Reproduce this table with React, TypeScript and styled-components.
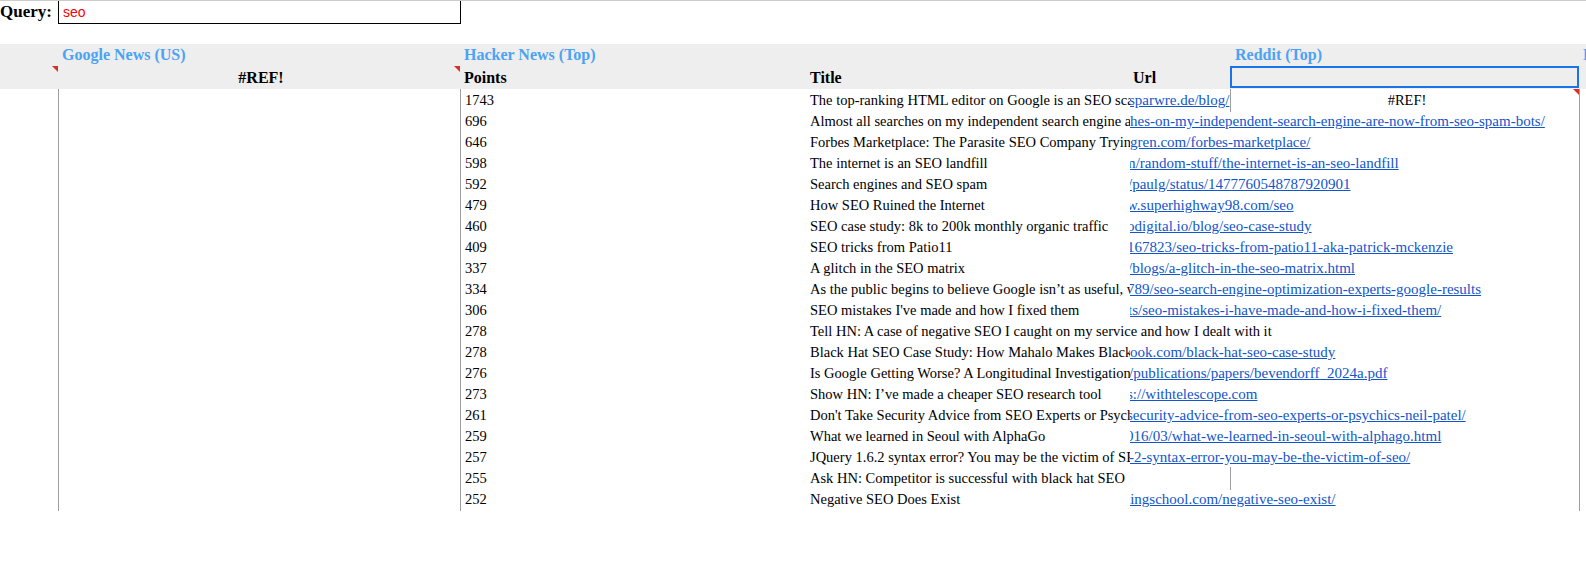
import React from 'react';
import styled, { createGlobalStyle, css } from 'styled-components';

// Anchos de columna de la hoja (A..G)
const COLS = '58px 402px 346px 324px 100px 349px 220px';

interface Story {
  points: number;
  title: string;
  url?: string;
  shift?: number; // recorte a la izquierda del enlace
}

const stories: Story[] = [
  { points: 1743, title: 'The top-ranking HTML editor on Google is an SEO scam', url: 'sparwre.de/blog/', shift: -1 },
  { points: 696, title: 'Almost all searches on my independent search engine are now from SEO spam bots', url: 'hes-on-my-independent-search-engine-are-now-from-seo-spam-bots/' },
  { points: 646, title: 'Forbes Marketplace: The Parasite SEO Company Trying to Devour Its Own Host', url: 'gren.com/forbes-marketplace/' },
  { points: 598, title: 'The internet is an SEO landfill', url: 'm/random-stuff/the-internet-is-an-seo-landfill', shift: -6 },
  { points: 592, title: 'Search engines and SEO spam', url: '/paulg/status/1477760548787920901', shift: -2 },
  { points: 479, title: 'How SEO Ruined the Internet', url: 'w.superhighway98.com/seo', shift: -3 },
  { points: 460, title: 'SEO case study: 8k to 200k monthly organic traffic', url: 'odigital.io/blog/seo-case-study', shift: -3 },
  { points: 409, title: 'SEO tricks from Patio11', url: '167823/seo-tricks-from-patio11-aka-patrick-mckenzie', shift: -3 },
  { points: 337, title: 'A glitch in the SEO matrix', url: '/blogs/a-glitch-in-the-seo-matrix.html', shift: -2 },
  { points: 334, title: 'As the public begins to believe Google isn’t as useful, where does that leave SEO?', url: '789/seo-search-engine-optimization-experts-google-results', shift: -3 },
  { points: 306, title: "SEO mistakes I've made and how I fixed them", url: 'ts/seo-mistakes-i-have-made-and-how-i-fixed-them/', shift: -2 },
  { points: 278, title: 'Tell HN: A case of negative SEO I caught on my service and how I dealt with it' },
  { points: 278, title: 'Black Hat SEO Case Study: How Mahalo Makes Black Hat Look White', url: 'ook.com/black-hat-seo-case-study' },
  { points: 276, title: 'Is Google Getting Worse? A Longitudinal Investigation of SEO Spam in Search Engines', url: '/publications/papers/bevendorff_2024a.pdf', shift: -1 },
  { points: 273, title: 'Show HN: I’ve made a cheaper SEO research tool', url: 's://withtelescope.com', shift: -3 },
  { points: 261, title: "Don't Take Security Advice from SEO Experts or Psychics", url: 'security-advice-from-seo-experts-or-psychics-neil-patel/', shift: -3 },
  { points: 259, title: 'What we learned in Seoul with AlphaGo', url: '016/03/what-we-learned-in-seoul-with-alphago.html', shift: -4 },
  { points: 257, title: 'JQuery 1.6.2 syntax error? You may be the victim of SEO', url: '-2-syntax-error-you-may-be-the-victim-of-seo/', shift: -1 },
  { points: 255, title: 'Ask HN: Competitor is successful with black hat SEO' },
  { points: 252, title: 'Negative SEO Does Exist', url: 'tingschool.com/negative-seo-exist/', shift: -4 },
];

const App: React.FC = () => {
  return (
    <Page>
      <GlobalStyle />
      <QueryBar>
        <QueryLabel>Query:</QueryLabel>
        <QueryInput type="text" defaultValue="seo" />
      </QueryBar>
      <Spacer />

      <Band>
        <Row $h={22}>
          <Cell />
          <Cell $head $blue>Google News (US)</Cell>
          <Cell $head $blue>Hacker News (Top)</Cell>
          <Cell />
          <Cell />
          <Cell $head $blue $pad={5}>Reddit (Top)</Cell>
          <Cell $head $blue>Lobsters (Top)</Cell>
        </Row>
        <Row $h={23}>
          <Cell $note />
          <Cell $head $align="center" $note>#REF!</Cell>
          <Cell $head>Points</Cell>
          <Cell $head>Title</Cell>
          <Cell $head $pad={3}>Url</Cell>
          <Selected />
          <Cell />
        </Row>
      </Band>

      {stories.map((s, i) => (
        <Row key={i} $h={21} $drop>
          <Cell />
          <Cell $line />
          <Cell $line>{s.points}</Cell>
          <Cell $clip={!!s.url}>{s.title}</Cell>
          {i === 0 ? (
            <>
              <Cell $clip $pad={0}>
                <Link href="#" $shift={s.shift ?? 0}>{s.url}</Link>
              </Cell>
              <Cell $line $align="center" $note>#REF!</Cell>
            </>
          ) : s.url ? (
            <Cell $clip $pad={0} $span={2}>
              <Link href="#" $shift={s.shift ?? 0}>{s.url}</Link>
            </Cell>
          ) : (
            <>
              <Cell />
              <Cell $line={i === 18} />
            </>
          )}
          <Cell $line />
        </Row>
      ))}
    </Page>
  );
};

const GlobalStyle = createGlobalStyle`
  html, body {
    margin: 0;
    padding: 0;
    background: #fff;
  }
  body {
    font-family: "Liberation Serif", "Times New Roman", serif;
    color: #000;
  }
`;

const Page = styled.div`
  width: 1586px;
  height: 575px;
  overflow: hidden;
  border-top: 1px solid #cccccc;
  box-sizing: border-box;
`;

const QueryBar = styled.div`
  display: flex;
  align-items: center;
  height: 22px;
`;

const QueryLabel = styled.span`
  width: 58px;
  font-weight: bold;
  font-size: 17px;
  line-height: 22px;
`;

const QueryInput = styled.input`
  width: 403px;
  height: 24px;
  margin: -1px 0 0 0;
  padding: 0 4px;
  box-sizing: border-box;
  border: 1px solid #000;
  border-radius: 0;
  outline: none;
  color: #ff0000;
  font-family: "Liberation Sans", Arial, sans-serif;
  font-size: 14px;
`;

const Spacer = styled.div`
  height: 21px;
`;

const Band = styled.div`
  background: #eeeeee;
`;

const Row = styled.div<{ $h: number; $drop?: boolean }>`
  display: grid;
  grid-template-columns: ${COLS};
  height: ${({ $h }) => $h}px;
  line-height: ${({ $h, $drop }) => ($drop ? $h + 2 : $h)}px;
`;

interface CellProps {
  $head?: boolean;
  $blue?: boolean;
  $align?: 'left' | 'center';
  $line?: boolean;
  $clip?: boolean;
  $note?: boolean;
  $pad?: number;
  $span?: number;
}

const Cell = styled.div<CellProps>`
  position: relative;
  box-sizing: border-box;
  padding-left: ${({ $pad }) => ($pad ?? 4)}px;
  white-space: nowrap;
  overflow: ${({ $clip }) => ($clip ? 'hidden' : 'visible')};
  text-align: ${({ $align }) => $align ?? 'left'};
  font-size: ${({ $head }) => ($head ? '16px' : '14.5px')};
  font-weight: ${({ $head }) => ($head ? 'bold' : 'normal')};
  color: ${({ $blue }) => ($blue ? '#4ba3f2' : '#000')};
  ${({ $line }) => $line && css`border-left: 1px solid #9e9e9e;`}
  ${({ $span }) => $span && css`grid-column: span ${$span};`}
  ${({ $note }) =>
    $note &&
    css`
      &::after {
        content: '';
        position: absolute;
        top: 0;
        right: 0;
        border-style: solid;
        border-width: 0 6px 6px 0;
        border-color: transparent #d93025 transparent transparent;
      }
    `}
`;

const Selected = styled.div`
  box-sizing: border-box;
  height: 22px;
  border: 2px solid #1a73e8;
`;

const Link = styled.a<{ $shift: number }>`
  display: inline-block;
  margin-left: ${({ $shift }) => $shift}px;
  color: #1155cc;
  font-size: 15px;
  text-decoration: underline;
`;

export default App;
